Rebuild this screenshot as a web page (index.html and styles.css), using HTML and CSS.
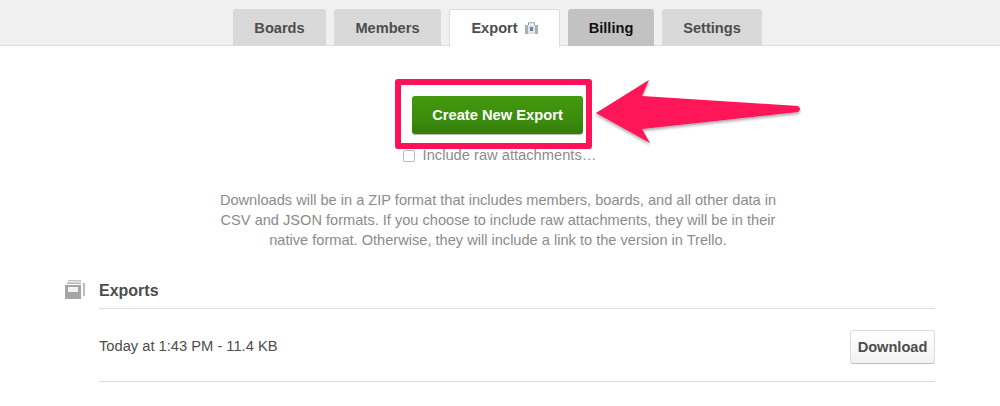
FILE: index.html
```html
<!DOCTYPE html>
<html lang="en">
<head>
<meta charset="utf-8">
<title>Export</title>
<link rel="stylesheet" href="styles.css">
</head>
<body>
<nav class="tabs">
  <a class="tab w-boards">Boards</a>
  <a class="tab w-members">Members</a>
  <a class="tab active w-export">Export
    <svg class="lock" width="13" height="12" viewBox="0 0 13 12"><path d="M3.5 3V.8h6V3" fill="none" stroke="#8c9aa8" stroke-width="1"/><rect x="0" y="3" width="13" height="9" fill="#a3b0bd"/><rect x="3" y="3" width="7" height="9" fill="#dfe4e9"/><rect x="5" y="5" width="3" height="4" fill="#6f8193"/></svg>
  </a>
  <a class="tab billing w-billing">Billing</a>
  <a class="tab w-settings">Settings</a>
</nav>
<main class="content">
  <div class="cta">
    <div class="highlight"><button class="primary">Create New Export</button></div>
    <svg class="arrow" width="212" height="74" viewBox="0 0 212 74"><defs><filter id="s" x="-10%" y="-20%" width="120%" height="150%"><feDropShadow dx="0" dy="2" stdDeviation="1.5" flood-color="#000" flood-opacity="0.35"/></filter></defs><path d="M2 34 L55 1 L48 17 L204 27 Q208 30 204 33 L48 50 L56 64 Z" fill="#ff1259" filter="url(#s)"/></svg>
  </div>
  <label class="check"><span class="box"></span>Include raw attachments…</label>
  <p class="desc">Downloads will be in a ZIP format that includes members, boards, and all other data in CSV and JSON formats. If you choose to include raw attachments, they will be in their native format. Otherwise, they will include a link to the version in Trello.</p>
  <section class="exports">
    <svg class="box-icon" width="21" height="20" viewBox="0 0 21 20"><rect x="3" y="0" width="13" height="1.5" fill="#c4c4c4"/><rect x="2" y="2.5" width="14" height="1.5" fill="#b5b5b5"/><rect x="0" y="5" width="16" height="14" fill="#a5a5a5"/><rect x="3" y="7" width="10" height="5" fill="#f2f2f2"/><rect x="18" y="3" width="2" height="13" fill="#bdbdbd"/></svg>
    <h3>Exports</h3>
    <div class="row"><span>Today at 1:43 PM - 11.4 KB</span><button class="dl">Download</button></div>
  </section>
</main>
</body>
</html>
```
FILE: styles.css
```css
* { box-sizing: border-box; }
html, body { margin: 0; padding: 0; }
body { width: 1000px; height: 406px; overflow: hidden; background: #fff; font-family: "Liberation Sans", Arial, sans-serif; color: #4d4d4d; }
.tabs { height: 46px; background: #f0f0f0; border-bottom: 1px solid #dcdcdc; display: flex; gap: 8px; padding: 9px 0 0 233px; }
.tab { height: 37px; background: #d9d9d9; border-radius: 3px 3px 0 0; font-size: 14.6px; font-weight: 700; color: #4d4d4d; display: flex; align-items: center; justify-content: center; }
.w-boards { width: 93px; }
.w-members { width: 107px; }
.w-export { width: 111px; }
.w-billing { width: 86px; }
.w-settings { width: 100px; }
.tab.active { background: #fff; height: 38px; border: 1px solid #dcdcdc; border-bottom: 0; gap: 7px; padding-bottom: 1px; }
.tab.billing { background: #c2c2c2; color: #111; }
.lock { flex: none; }
.content { position: relative; }
.cta { height: 72px; margin-top: 33px; position: relative; display: flex; justify-content: center; align-items: flex-start; }
.highlight { width: 197px; height: 70px; margin-left: -14px; border: 6px solid #ff1259; border-radius: 3px; display: flex; align-items: center; justify-content: center; padding: 2px 0 0 9px; }
.primary { width: 171px; height: 38px; border: 0; border-radius: 3px; background: linear-gradient(#43990f, #3a8a0c 70%, #357a0c); color: #fff; font: 700 14.7px "Liberation Sans", sans-serif; padding: 0; box-shadow: 0 1px 1px rgba(0,0,0,.3); }
.arrow { position: absolute; left: 594px; top: 0; }
.check { display: flex; align-items: center; justify-content: center; height: 20px; margin-top: -6px; color: #8c8c8c; font-size: 14.7px; gap: 8px; padding-right: 1px; }
.box { width: 12px; height: 12px; border: 1px solid #bdbdbd; border-radius: 2px; background: #fff; margin-top: 2px; }
.desc { width: 566px; margin: 25px auto 0; text-align: center; font-size: 14.6px; line-height: 20px; color: #8c8c8c; position: relative; left: -2px; }
.exports { position: relative; margin: 30px 65px 0 99px; }
.box-icon { position: absolute; left: -34px; top: 0; }
h3 { margin: 0; font-size: 16px; line-height: 20px; font-weight: 700; color: #4d4d4d; padding: 1px 0 7px; border-bottom: 1px solid #dcdcdc; }
.row { height: 73px; border-bottom: 1px solid #dcdcdc; display: flex; align-items: center; justify-content: space-between; font-size: 14.7px; padding-top: 2px; }
.dl { width: 85px; height: 34px; border: 1px solid #dcdcdc; border-bottom-color: #bdbdbd; border-radius: 3px; background: linear-gradient(#fff, #f2f2f2); font: 700 14.6px "Liberation Sans", sans-serif; color: #4d4d4d; padding: 0; margin-top: 1px; }
```
